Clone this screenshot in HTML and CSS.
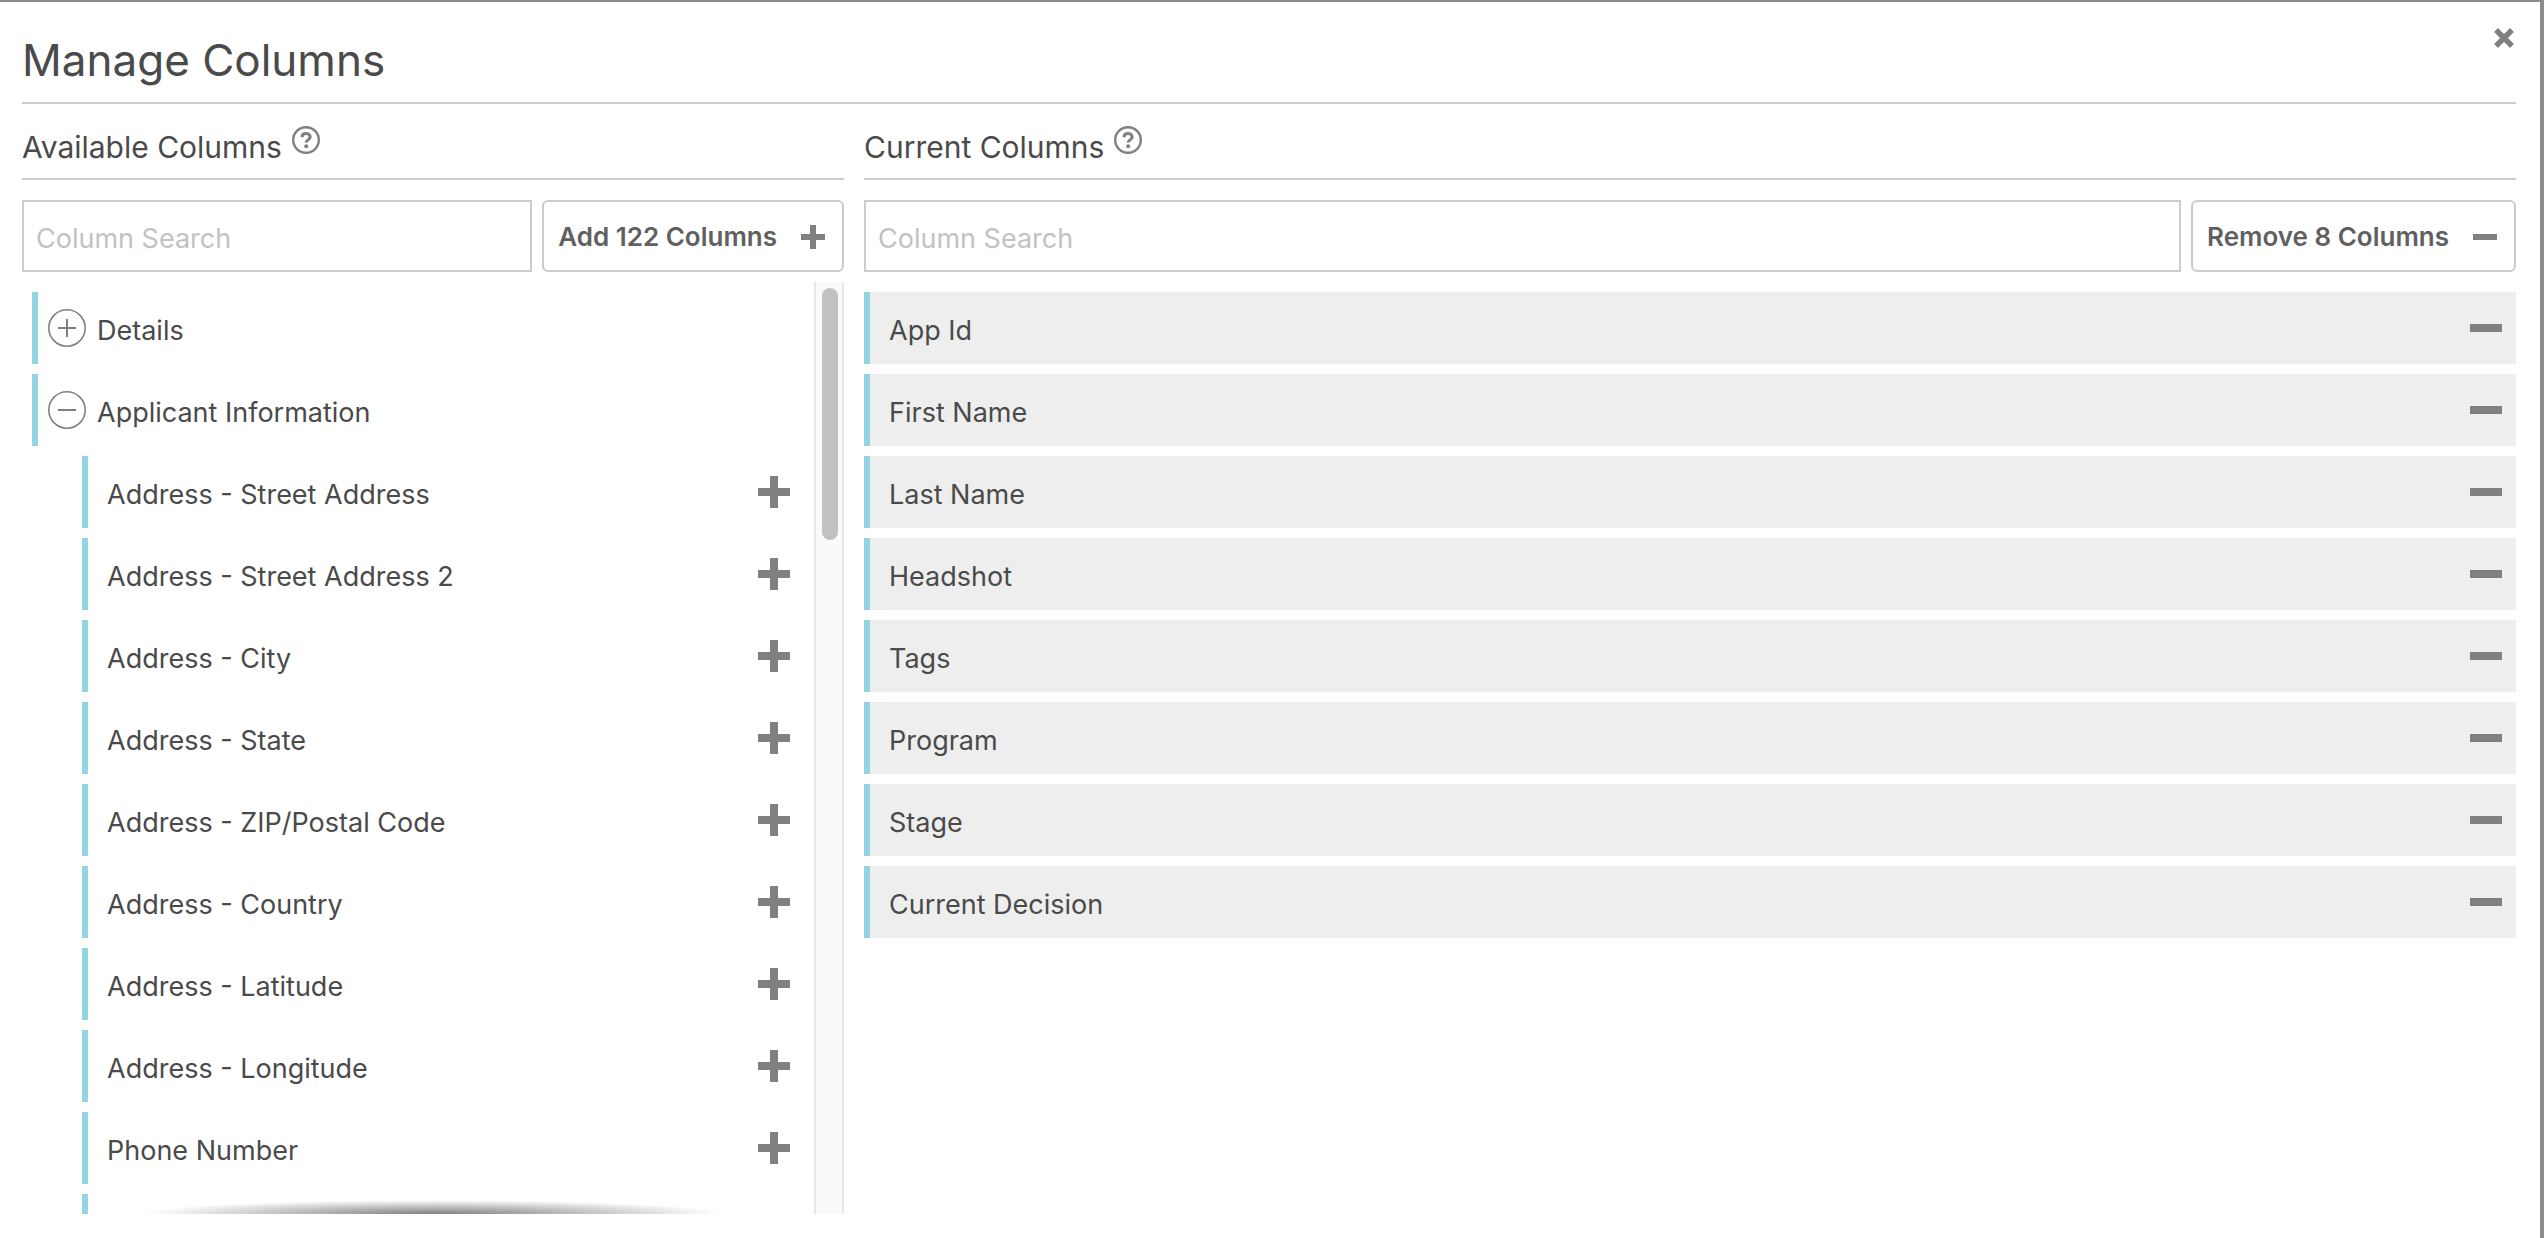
FILE: index.html
```html
<!DOCTYPE html>
<html lang="en">
<head>
<meta charset="utf-8">
<title>Manage Columns</title>
<link rel="stylesheet" href="styles.css">
</head>
<body>
<svg class="sprite" aria-hidden="true">
  <symbol id="plus" viewBox="0 0 32 32"><path d="M12 0h8v12h12v8H20v12h-8V20H0v-8h12z"/></symbol>
  <symbol id="minus" viewBox="0 0 32 32"><path d="M0 12h32v8H0z"/></symbol>
  <symbol id="help" viewBox="0 0 28 28"><circle cx="14" cy="14" r="12.800" fill="none" stroke="currentColor" stroke-width="2.400"/><path d="M10 11.200C10 8.600 11.700 7.400 14 7.400s4.200 1.400 4.200 3.600c0 2.600-3.900 2.700-3.900 5.600" fill="none" stroke="currentColor" stroke-width="3"/><circle cx="14.200" cy="20.300" r="2"/></symbol>
  <symbol id="expand" viewBox="0 0 38 38"><circle cx="19" cy="19" r="18.200" fill="none" stroke="currentColor" stroke-width="1.600"/><path d="M10 18h8v-8h2v8h8v2h-8v8h-2v-8h-8z"/></symbol>
  <symbol id="collapse" viewBox="0 0 38 38"><circle cx="19" cy="19" r="18.200" fill="none" stroke="currentColor" stroke-width="1.600"/><path d="M10 18h18v2H10z"/></symbol>
</svg>
<main class="dialog">
  <header class="dialog-header">
    <h1>Manage Columns</h1>
    <button class="icon-button close" aria-label="Close"><svg viewBox="0 0 20 20"><path d="M2 2l16 16M18 2L2 18" stroke="currentColor" stroke-width="5.400"/></svg></button>
  </header>
  <div class="panels">
    <section class="panel">
      <h2>Available Columns <button class="icon-button help" aria-label="About available columns"><svg><use href="#help"/></svg></button></h2>
      <div class="toolbar">
        <input type="text" placeholder="Column Search" aria-label="Search available columns">
        <button class="bulk">Add 122 Columns <svg><use href="#plus"/></svg></button>
      </div>
      <div class="scroller">
        <ul class="list available">
          <li class="row group"><button class="icon-button toggle" aria-label="Expand Details"><svg><use href="#expand"/></svg></button><span>Details</span></li>
          <li class="row group"><button class="icon-button toggle" aria-label="Collapse Applicant Information"><svg><use href="#collapse"/></svg></button><span>Applicant Information</span></li>
          <li class="row child"><span>Address - Street Address</span><button class="icon-button" aria-label="Add"><svg><use href="#plus"/></svg></button></li>
          <li class="row child"><span>Address - Street Address 2</span><button class="icon-button" aria-label="Add"><svg><use href="#plus"/></svg></button></li>
          <li class="row child"><span>Address - City</span><button class="icon-button" aria-label="Add"><svg><use href="#plus"/></svg></button></li>
          <li class="row child"><span>Address - State</span><button class="icon-button" aria-label="Add"><svg><use href="#plus"/></svg></button></li>
          <li class="row child"><span>Address - ZIP/Postal Code</span><button class="icon-button" aria-label="Add"><svg><use href="#plus"/></svg></button></li>
          <li class="row child"><span>Address - Country</span><button class="icon-button" aria-label="Add"><svg><use href="#plus"/></svg></button></li>
          <li class="row child"><span>Address - Latitude</span><button class="icon-button" aria-label="Add"><svg><use href="#plus"/></svg></button></li>
          <li class="row child"><span>Address - Longitude</span><button class="icon-button" aria-label="Add"><svg><use href="#plus"/></svg></button></li>
          <li class="row child"><span>Phone Number</span><button class="icon-button" aria-label="Add"><svg><use href="#plus"/></svg></button></li>
          <li class="row child"></li>
        </ul>
        <div class="track"><div class="thumb"></div></div>
      </div>
    </section>
    <section class="panel">
      <h2>Current Columns <button class="icon-button help" aria-label="About current columns"><svg><use href="#help"/></svg></button></h2>
      <div class="toolbar">
        <input type="text" placeholder="Column Search" aria-label="Search current columns">
        <button class="bulk">Remove 8 Columns <svg><use href="#minus"/></svg></button>
      </div>
      <ul class="list current">
        <li class="row"><span>App Id</span><button class="icon-button" aria-label="Remove App Id"><svg><use href="#minus"/></svg></button></li>
        <li class="row"><span>First Name</span><button class="icon-button" aria-label="Remove First Name"><svg><use href="#minus"/></svg></button></li>
        <li class="row"><span>Last Name</span><button class="icon-button" aria-label="Remove Last Name"><svg><use href="#minus"/></svg></button></li>
        <li class="row"><span>Headshot</span><button class="icon-button" aria-label="Remove Headshot"><svg><use href="#minus"/></svg></button></li>
        <li class="row"><span>Tags</span><button class="icon-button" aria-label="Remove Tags"><svg><use href="#minus"/></svg></button></li>
        <li class="row"><span>Program</span><button class="icon-button" aria-label="Remove Program"><svg><use href="#minus"/></svg></button></li>
        <li class="row"><span>Stage</span><button class="icon-button" aria-label="Remove Stage"><svg><use href="#minus"/></svg></button></li>
        <li class="row"><span>Current Decision</span><button class="icon-button" aria-label="Remove Current Decision"><svg><use href="#minus"/></svg></button></li>
      </ul>
    </section>
  </div>
</main>
</body>
</html>
```
FILE: styles.css
```css
* { box-sizing: border-box; }

body {
  margin: 0;
  background: #fff;
  color: #4a4a4a;
  font: 27px/36px Inter, "Liberation Sans", sans-serif;
}

.sprite { position: absolute; width: 0; height: 0; }

svg { display: block; fill: currentColor; }

button, input { font: inherit; border-radius: 0; }

.dialog {
  display: flex;
  flex-direction: column;
  height: 100vh;
  border-top: 2px solid #8c8c8c;
  border-right: 4px solid #8c8c8c;
  padding: 0 24px 24px 22px;
}

.dialog-header {
  display: flex;
  justify-content: space-between;
  flex: none;
  height: 102px;
  border-bottom: 2px solid #ccc;
}

h1, h2 { margin: 0; font-weight: 400; }

h1 { padding-top: 30px; font-size: 44px; line-height: 56px; }

.icon-button {
  flex: none;
  width: 32px;
  height: 32px;
  padding: 0;
  border: 0;
  background: none;
  color: #808080;
}

.icon-button svg { width: 100%; height: 100%; }

.close { width: 20px; height: 20px; margin: 26px 2px 0 0; }

.panels {
  display: grid;
  grid-template-columns: 822fr 1652fr;
  grid-template-rows: minmax(0, 1fr);
  gap: 20px;
  flex: 1;
  min-height: 0;
}

.panel { display: flex; flex-direction: column; min-width: 0; }

h2 {
  display: flex;
  gap: 10px;
  flex: none;
  height: 76px;
  padding-top: 22px;
  border-bottom: 2px solid #ccc;
  font-size: 30px;
  line-height: 42px;
}

.help { width: 28px; height: 28px; }

.toolbar { display: flex; gap: 10px; flex: none; padding: 20px 0 10px; }

.toolbar input {
  flex: 1;
  min-width: 0;
  height: 72px;
  padding: 4px 12px 0;
  border: 2px solid #ccc;
  background: #fff;
  color: #4a4a4a;
}

.toolbar input::placeholder { color: #c2c2c2; opacity: 1; }

.bulk {
  display: flex;
  align-items: center;
  gap: 24px;
  height: 72px;
  padding: 2px 17px 0 14px;
  border: 2px solid #ccc;
  border-radius: 6px;
  background: #fff;
  color: #606060;
  font-size: 26px;
  font-weight: 600;
  white-space: nowrap;
}

.bulk svg { width: 24px; height: 24px; color: #808080; }

.scroller { display: flex; flex: 1; min-height: 0; position: relative; }

/* Shade that shows there are more rows below */
.scroller::after {
  content: "";
  position: absolute;
  inset: auto 0 0;
  height: 14px;
  background: radial-gradient(291px 14px at 50% 100%, rgba(0, 0, 0, .5), transparent);
  pointer-events: none;
}

.list {
  display: flex;
  flex-direction: column;
  gap: 10px;
  margin: 0;
  padding: 10px 0 0;
  list-style: none;
}

.available { flex: 1; padding: 10px 24px 0 10px; overflow: hidden; }

.row {
  display: flex;
  align-items: center;
  justify-content: space-between;
  flex: none;
  height: 72px;
  padding: 0 14px 0 19px;
  border-left: 6px solid #92d5e0;
}

.row span { padding-top: 5px; }

.current .row { background: #eee; }

.group { justify-content: flex-start; gap: 11px; padding: 0 10px; }

.child { margin-left: 50px; padding-right: 0; }

.toggle { width: 38px; height: 38px; }

.track {
  flex: none;
  width: 30px;
  padding: 6px 6px;
  border: solid #e8e8e8;
  border-width: 0 2px;
  background: #fafafa;
}

.thumb { width: 16px; height: 252px; border-radius: 8px; background: #c1c1c1; }
```
